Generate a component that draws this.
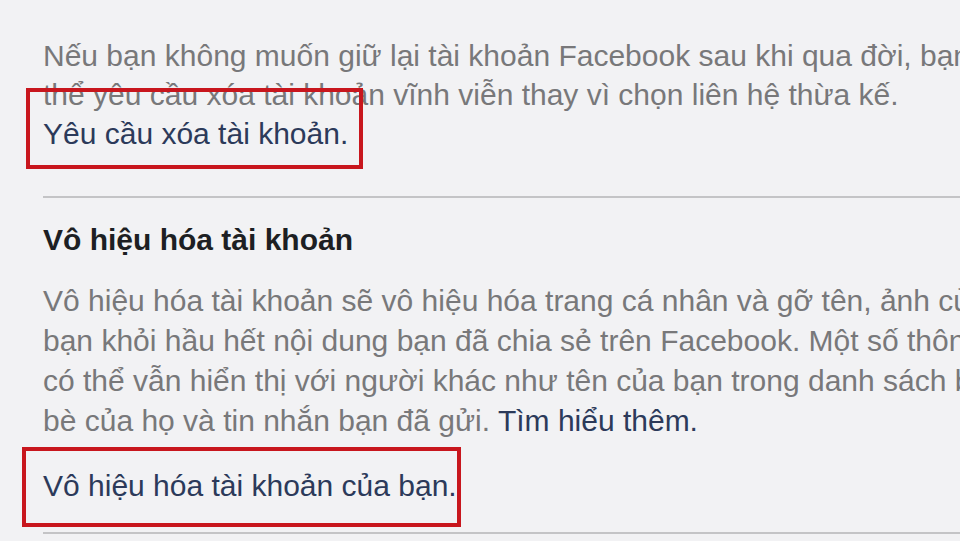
import React from "react";

function RedBox({ className }) {
  // khung đỏ đánh dấu, nằm đè lên nội dung
  return <div className={`absolute border-[4px] border-[#c8161d] ${className}`} />;
}

export default function App() {
  return (
    <div className="relative w-[960px] h-[541px] overflow-hidden bg-[#f2f2f4] font-['Liberation_Sans',Arial,sans-serif]">
      <div className="pl-[43px] w-[1200px]">
        <p className="pt-[36px] text-[30px] leading-[39px] text-[#78787a] whitespace-nowrap">
          Nếu bạn không muốn giữ lại tài khoản Facebook sau khi qua đời, bạn có
          <br />
          thể yêu cầu xóa tài khoản vĩnh viễn thay vì chọn liên hệ thừa kế.
          <br />
          <a href="#" className="text-[#2c3a5a]">
            Yêu cầu xóa tài khoản.
          </a>
        </p>

        <div className="mt-[43px] h-[2px] bg-[#c4c4c6]" />

        <h2 className="mt-[22px] text-[30px] leading-[39px] font-bold text-[#1d1f23] whitespace-nowrap">
          Vô hiệu hóa tài khoản
        </h2>

        <p className="mt-[22px] text-[30px] leading-[40px] text-[#78787a] whitespace-nowrap">
          Vô hiệu hóa tài khoản sẽ vô hiệu hóa trang cá nhân và gỡ tên, ảnh của
          <br />
          bạn khỏi hầu hết nội dung bạn đã chia sẻ trên Facebook. Một số thông tin
          <br />
          có thể vẫn hiển thị với người khác như tên của bạn trong danh sách bạn
          <br />
          bè của họ và tin nhắn bạn đã gửi.{" "}
          <a href="#" className="text-[#2c3a5a]">
            Tìm hiểu thêm.
          </a>
        </p>

        <p className="mt-[25px] text-[30px] leading-[40px] whitespace-nowrap">
          <a href="#" className="text-[#2c3a5a]">
            Vô hiệu hóa tài khoản của bạn.
          </a>
        </p>

        <div className="mt-[26px] h-[2px] bg-[#c4c4c6]" />
      </div>

      <RedBox className="left-[26px] top-[88px] w-[337px] h-[81px]" />
      <RedBox className="left-[22px] top-[447px] w-[439px] h-[80px]" />
    </div>
  );
}
